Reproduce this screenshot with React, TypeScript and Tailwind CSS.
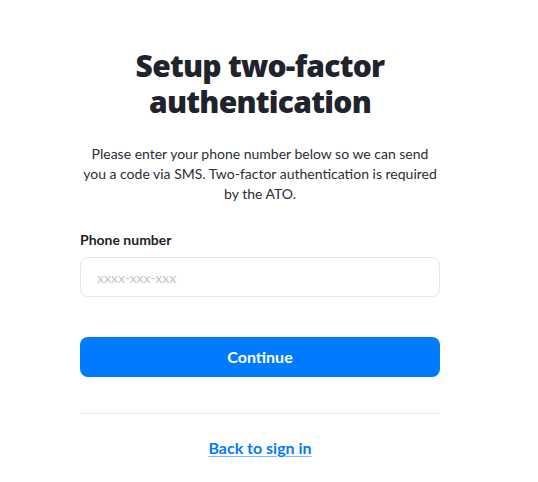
import React from "react";

export default function App() {
  return (
    <div
      className="min-h-screen bg-white w-[520px] flex justify-center"
      style={{ fontFamily: '"Lato", "Open Sans", sans-serif' }}
    >
      <div className="w-[360px] pt-12 flex flex-col">
        <h1
          className="text-center text-[30px] leading-9 font-extrabold text-[#1f232b] px-6 tracking-[-0.025em]"
          style={{ fontFamily: '"Open Sans", sans-serif' }}
        >
          Setup two-factor authentication
        </h1>
        <p className="mt-6 text-center text-sm leading-5 text-[#2a2e36]">
          Please enter your phone number below so we can send you a code via SMS.
          Two-factor authentication is required by the ATO.
        </p>
        <label className="mt-[26px] text-sm leading-5 font-bold text-[#1f232b]">
          Phone number
        </label>
        <input
          type="tel"
          placeholder="xxxx-xxx-xxx"
          className="mt-[7px] h-10 w-full rounded-lg border border-[#e3e5e8] px-4 text-sm text-[#1f232b] placeholder:text-[#c4c6ca] outline-none"
        />
        <button className="mt-10 h-10 w-full rounded-lg bg-[#007bff] text-white font-bold text-base">
          Continue
        </button>
        <div className="mt-9 h-px w-full bg-[#e5e7eb]" />
        <div className="mt-[22px] text-center">
          <a
            href="#"
            className="text-base leading-6 font-bold text-[#007bff] underline decoration-[#7fb8ff] underline-offset-2"
          >
            Back to sign in
          </a>
        </div>
      </div>
    </div>
  );
}
